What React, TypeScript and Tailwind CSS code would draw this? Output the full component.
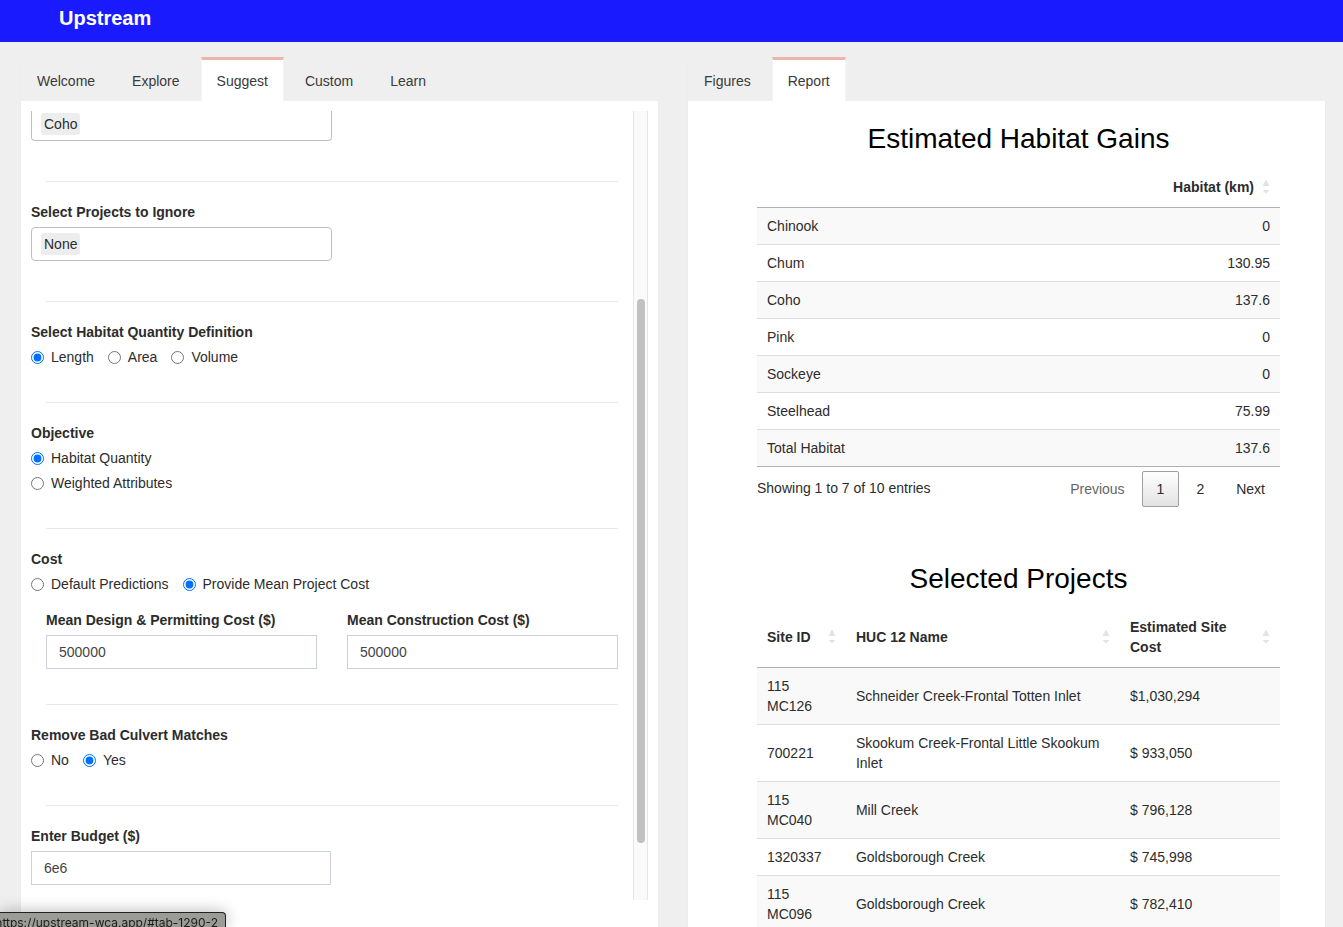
import React, { useId, useState } from "react";
import clsx from "clsx";

function Tabs({ items, initial }: { items: string[]; initial: string }) {
  const [active, setActive] = useState(initial);
  return (
    <ul className="flex h-11 gap-[5px] border-b border-[#f0f0f0] bg-[#efefef]">
      {items.map((item) => (
        <li key={item} className="-mb-px">
          <a
            href={"#" + item.toLowerCase()}
            onClick={(e) => {
              e.preventDefault();
              setActive(item);
            }}
            className={clsx(
              "block h-11 border-x border-t-[3px] px-[15px] pt-[11px] text-[#3a3a3a]",
              item === active
                ? "border-x-[#f4f4f4] border-t-[#ebb5ac] bg-white"
                : "border-transparent"
            )}
          >
            {item}
          </a>
        </li>
      ))}
    </ul>
  );
}

function Panel({ tabs, initial, children }: { tabs: string[]; initial: string; children: React.ReactNode }) {
  return (
    <section className="min-h-screen min-w-0 rounded-t-[3px] bg-white shadow-[0_1px_1px_rgba(0,0,0,0.1)]">
      <Tabs items={tabs} initial={initial} />
      {children}
    </section>
  );
}

function RadioGroup({
  legend,
  options,
  initial,
  stacked = false,
}: {
  legend: string;
  options: string[];
  initial: string;
  stacked?: boolean;
}) {
  const name = useId();
  const [value, setValue] = useState(initial);
  return (
    <fieldset>
      <legend className="mb-[5px] font-bold">{legend}</legend>
      <div className={clsx("flex", stacked ? "flex-col gap-[5px]" : "gap-[14px]")}>
        {options.map((option) => (
          <label key={option} className="flex items-center gap-[7px]">
            <input
              type="radio"
              name={name}
              checked={value === option}
              onChange={() => setValue(option)}
              className="size-[13px] accent-[#0070ff]"
            />
            {option}
          </label>
        ))}
      </div>
    </fieldset>
  );
}

function TextField({ label, initial, inputClass }: { label: string; initial: string; inputClass: string }) {
  const id = useId();
  return (
    <div>
      <label htmlFor={id} className="mb-[5px] block font-bold">
        {label}
      </label>
      <input
        id={id}
        type="text"
        defaultValue={initial}
        className={clsx("block h-[34px] border border-[#ccd0dc] bg-white px-3 text-[#444]", inputClass)}
      />
    </div>
  );
}

function TagBox({ id, label, tag, boxClass }: { id: string; label?: string; tag: string; boxClass: string }) {
  return (
    <div className={clsx("flex w-1/2 gap-1 border border-[#c0c0c0] px-[9px]", boxClass)}>
      <span className="h-[22px] rounded-[3px] bg-[#ededed] px-[3px] leading-[22px]">{tag}</span>
      <input id={id} type="text" aria-label={label} className="h-[22px] min-w-0 flex-1 outline-none" />
    </div>
  );
}

function Divider({ tight = false }: { tight?: boolean }) {
  return <hr className={clsx("mx-[15px] mb-5 border-t border-[#e8e8e8]", tight ? "mt-10" : "mt-[35px]")} />;
}

function SuggestForm() {
  return (
    <div className="flex h-[calc(85vh+1px)] overflow-hidden">
      <form className="min-w-0 flex-1">
        <TagBox id="species" label="Species" tag="Coho" boxClass="h-[30px] rounded-b-[4px] border-t-0 pt-[2px]" />
        <Divider tight />
        <label htmlFor="ignored" className="mb-[5px] block font-bold">
          Select Projects to Ignore
        </label>
        <TagBox id="ignored" tag="None" boxClass="h-[34px] rounded-[4px] pt-[5px]" />
        <Divider tight />
        <RadioGroup legend="Select Habitat Quantity Definition" options={["Length", "Area", "Volume"]} initial="Length" />
        <Divider />
        <RadioGroup
          legend="Objective"
          options={["Habitat Quantity", "Weighted Attributes"]}
          initial="Habitat Quantity"
          stacked
        />
        <Divider />
        <RadioGroup
          legend="Cost"
          options={["Default Predictions", "Provide Mean Project Cost"]}
          initial="Provide Mean Project Cost"
        />
        <div className="mx-[15px] mt-4 grid grid-cols-2 gap-[30px]">
          <TextField label="Mean Design & Permitting Cost ($)" initial="500000" inputClass="w-full" />
          <TextField label="Mean Construction Cost ($)" initial="500000" inputClass="w-full" />
        </div>
        <Divider />
        <RadioGroup legend="Remove Bad Culvert Matches" options={["No", "Yes"]} initial="Yes" />
        <Divider />
        <TextField label="Enter Budget ($)" initial="6e6" inputClass="w-[300px]" />
      </form>
      <div className="flex w-[15px] shrink-0 justify-center border-x border-[#e6e6e6] bg-[#fafafa]">
        <div className="mt-[188px] h-[69%] w-2 rounded-full bg-[#c1c1c1]" />
      </div>
    </div>
  );
}

function SortIcon() {
  return (
    <svg viewBox="0 0 8 16" className="h-4 w-2 shrink-0" fill="#e3e3e3" aria-hidden="true">
      <path d="M4 0.5 L7.5 7 H0.5 Z" />
      <path d="M0.5 11 H7.5 L4 14.5 Z" />
    </svg>
  );
}

function HeadCell({ children, end = false }: { children: React.ReactNode; end?: boolean }) {
  return (
    <th scope="col" className="px-[10px] py-[10px] text-left font-bold">
      <div className={clsx("flex items-center gap-2", end ? "justify-end" : "justify-between")}>
        <span>{children}</span>
        <SortIcon />
      </div>
    </th>
  );
}

const habitat = [
  ["Chinook", "0"],
  ["Chum", "130.95"],
  ["Coho", "137.6"],
  ["Pink", "0"],
  ["Sockeye", "0"],
  ["Steelhead", "75.99"],
  ["Total Habitat", "137.6"],
];

const projects = [
  ["115 MC126", "Schneider Creek-Frontal Totten Inlet", "$1,030,294"],
  ["700221", "Skookum Creek-Frontal Little Skookum Inlet", "$ 933,050"],
  ["115 MC040", "Mill Creek", "$ 796,128"],
  ["1320337", "Goldsborough Creek", "$ 745,998"],
  ["115 MC096", "Goldsborough Creek", "$ 782,410"],
];

const tableClass = "w-full table-fixed border-separate border-spacing-0";
const rowClass = "group odd:bg-[#f9f9f9]";
const bodyCell = "border-t border-[#ddd] px-[10px] py-2 group-first:border-[#b0b0b0]";
const pageButton = "border px-[14px] py-[7px]";

function Report() {
  return (
    <div className="pt-[22px] pr-[45px] pl-[69px]">
      <h2 className="mb-[13px] text-center text-[28px] leading-[31px] text-black">Estimated Habitat Gains</h2>
      <table className={clsx(tableClass, "border-b border-[#b0b0b0]")}>
        <thead>
          <tr>
            <th className="px-[10px]" aria-label="Species" />
            <HeadCell end>Habitat (km)</HeadCell>
          </tr>
        </thead>
        <tbody>
          {habitat.map(([name, km]) => (
            <tr key={name} className={rowClass}>
              <td className={bodyCell}>{name}</td>
              <td className={clsx(bodyCell, "text-right")}>{km}</td>
            </tr>
          ))}
        </tbody>
      </table>
      <div className="flex items-start justify-between pt-1">
        <p className="pt-[7px]">Showing 1 to 7 of 10 entries</p>
        <nav className="flex gap-[2px]" aria-label="Pages">
          <button className={clsx(pageButton, "border-transparent text-[#666]")}>Previous</button>
          <button className={clsx(pageButton, "rounded-[2px] border-[#a0a0a0] bg-linear-to-b from-white to-[#e2e2e2]")}>
            1
          </button>
          <button className={clsx(pageButton, "border-transparent")}>2</button>
          <button className={clsx(pageButton, "border-transparent")}>Next</button>
        </nav>
      </div>
      <h2 className="mt-14 mb-[13px] text-center text-[28px] leading-[31px] text-black">Selected Projects</h2>
      <table className={tableClass}>
        <colgroup>
          <col className="w-[17%]" />
          <col />
          <col className="w-[160px]" />
        </colgroup>
        <thead>
          <tr>
            <HeadCell>Site ID</HeadCell>
            <HeadCell>HUC 12 Name</HeadCell>
            <HeadCell>Estimated Site Cost</HeadCell>
          </tr>
        </thead>
        <tbody>
          {projects.map(([id, name, cost]) => (
            <tr key={id} className={rowClass}>
              <td className={bodyCell}>{id}</td>
              <td className={bodyCell}>{name}</td>
              <td className={bodyCell}>{cost}</td>
            </tr>
          ))}
        </tbody>
      </table>
    </div>
  );
}

export default function App() {
  return (
    <div className="h-screen overflow-hidden bg-[#efefef] font-['Liberation_Sans',Arial,sans-serif] text-[14px] leading-5 text-[#2c2c2c]">
      <header className="flex h-[42px] items-center bg-[#1a1aff] pb-[7px] pl-[59px]">
        <h1 className="text-[20px] font-bold text-white">Upstream</h1>
      </header>
      <main className="grid grid-cols-2 gap-[30px] pt-[15px] pr-[18px] pl-[21px]">
        <Panel tabs={["Welcome", "Explore", "Suggest", "Custom", "Learn"]} initial="Suggest">
          <div className="p-[10px]">
            <SuggestForm />
          </div>
        </Panel>
        <Panel tabs={["Figures", "Report"]} initial="Report">
          <Report />
        </Panel>
      </main>
      <div className="fixed bottom-0 left-0 flex h-[15px] w-[226px] justify-end overflow-hidden rounded-tr-[4px] border-t border-r border-[#222] bg-[#9b9b98] pr-[7px] font-['Inter',sans-serif] text-[12px] leading-5 whitespace-nowrap text-[#1c1c1c] shadow-[0_0_16px_rgba(0,0,0,0.3)]">
        https://upstream-wca.app/#tab-1290-2
      </div>
    </div>
  );
}
